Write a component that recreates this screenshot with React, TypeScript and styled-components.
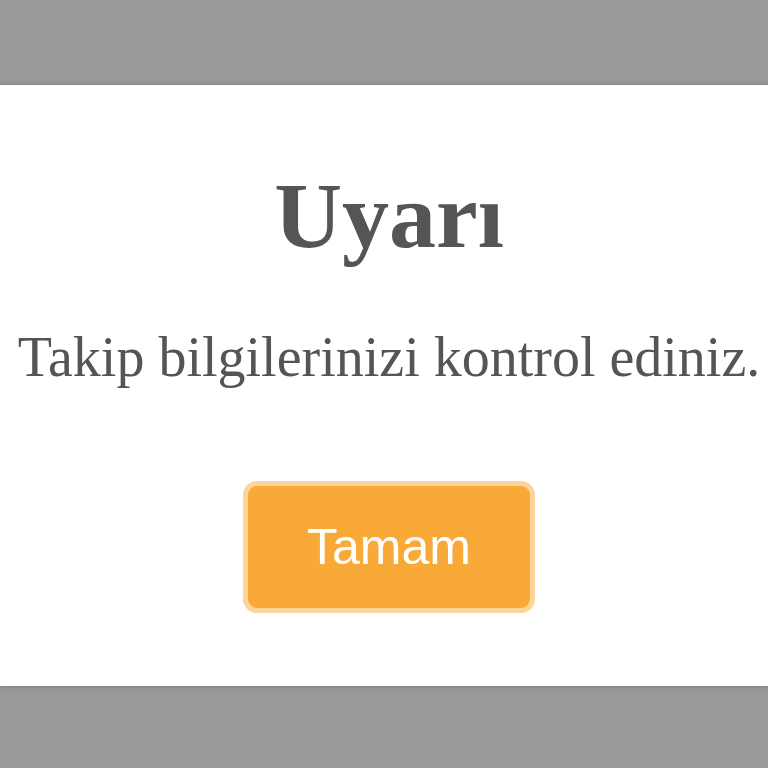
import React from "react";
import styled, { createGlobalStyle } from "styled-components";

const GlobalStyle = createGlobalStyle`
	html, body {
		margin: 0;
		padding: 0;
		background: #999999;
	}
	body {
		padding-top: 85px;
		height: 768px;
		box-sizing: border-box;
		overflow: hidden;
	}
`;

const Dialog = styled.div`
	display: flex;
	flex-direction: column;
	align-items: center;
	background: #ffffff;
	height: 601px;
	box-sizing: border-box;
	padding: 83px 0 0 10px;
	box-shadow: 0 0 4px rgba(0, 0, 0, 0.25);
`;

const Title = styled.h2`
	margin: 0;
	font-family: "Liberation Serif", "Times New Roman", serif;
	font-weight: bold;
	font-size: 94px;
	line-height: 1;
	color: #555555;
`;

const Message = styled.p`
	margin: 67px 0 0;
	font-family: "Liberation Serif", "Times New Roman", serif;
	font-size: 56px;
	line-height: 1;
	color: #555555;
	white-space: nowrap;
`;

const OkButton = styled.button`
	margin-top: 96px;
	width: 292px;
	height: 132px;
	box-sizing: border-box;
	border: 5px solid #fdd49a;
	border-radius: 14px;
	background: #f9a937;
	color: #ffffff;
	font-family: "Liberation Sans", Arial, sans-serif;
	font-size: 50px;
	cursor: pointer;
	padding: 0;
`;

const App = () => {
	return (
		<>
			<GlobalStyle />
			<Dialog>
				<Title>Uyarı</Title>
				<Message>Takip bilgilerinizi kontrol ediniz.</Message>
				<OkButton>Tamam</OkButton>
			</Dialog>
		</>
	);
};

export default App;
